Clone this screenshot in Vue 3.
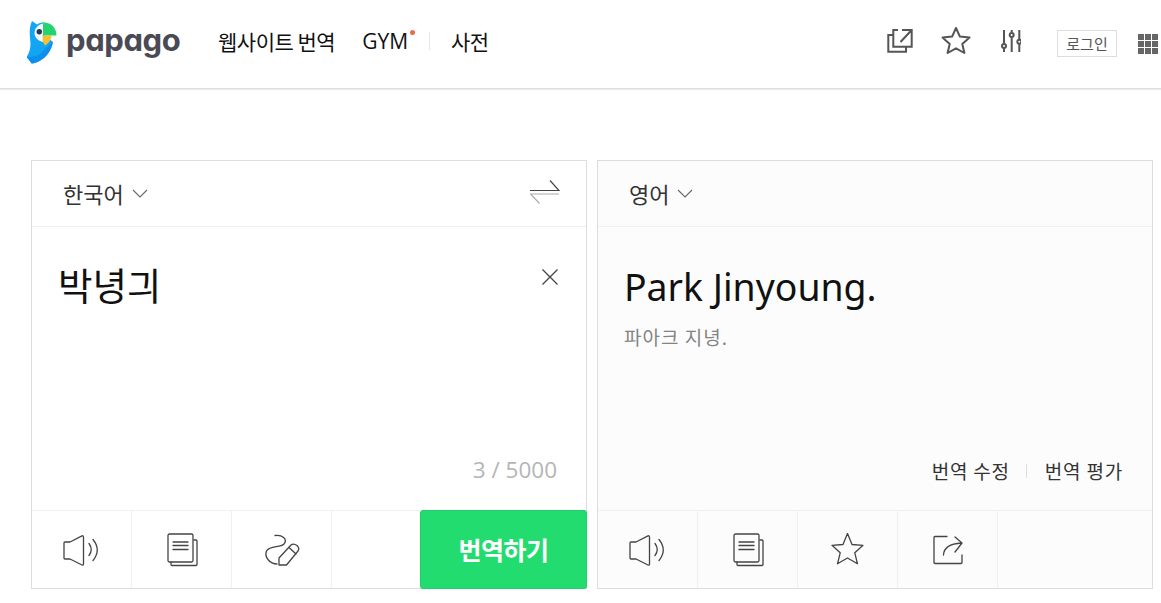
<script setup>
const leftTools = ['sound', 'copy', 'draw']
const rightTools = ['sound', 'copy', 'star', 'share']
</script>

<template>
  <div class="page">
    <header class="top">
      <div class="brand">
        <svg class="bird" width="31" height="44" viewBox="0 0 31 44">
          <path d="M6 1 L11 4.500 C13 3 15 2.500 18 2.500 L18 15 L27 22 C25 32 19 38 15 40 C12 42 8 43.500 5.700 43.500 L0.700 37 C3 33 4.500 29 4.500 24 C4.500 17 2 10 6 1 Z" fill="#12a5f4"/>
          <path d="M0.700 37 C8 37 14 36 19 29 L27 22 C25 32 19 38 15 40 C12 42 8 43.500 5.700 43.500 Z" fill="#0d8fee"/>
          <path d="M16.500 2.500 C24 1.500 30.500 7 30.500 15.500 L16.500 15.500 Z" fill="#24d46e"/>
          <path d="M17 3.500 C12 4.500 8.500 8.500 8.500 13 C8.500 17.500 12 21 17 22 Z" fill="#f2fafd"/>
          <circle cx="13.300" cy="11.700" r="2.700" fill="#27384a"/>
          <path d="M16.700 15.500 L25.500 15.500 C25.500 20 22 23.500 19 25.500 L16.700 21.500 Z" fill="#f8bf2f"/>
        </svg>
        <span class="wordmark">papago</span>
      </div>
      <nav class="menu">
        <a class="menu-item">웹사이트 번역</a>
        <a class="menu-item gym">GYM<i class="dot"></i></a>
        <span class="sep"></span>
        <a class="menu-item">사전</a>
      </nav>
      <div class="actions">
        <svg width="26" height="26" viewBox="0 0 26 26" fill="none" stroke="#555" stroke-width="2">
          <path d="M6.300 7 H1.300 V23.700 H19 V19"/>
          <path d="M11 2 H6.300 V18.700 H24.700 V11"/>
          <path d="M15 2 H24.700 V11 M24.700 2 L13.500 14"/>
        </svg>
        <svg class="head-star" width="30" height="28" viewBox="0 0 30 28" fill="none" stroke="#555" stroke-width="2" stroke-linejoin="round">
          <path d="M15 1 L18.900 9.600 L28.500 10.600 L21.300 17 L23.400 26 L15 21.300 L6.600 26 L8.700 17 L1.500 10.600 L11.100 9.600 Z"/>
        </svg>
        <svg class="sliders" width="20" height="24" viewBox="0 0 20 24" fill="none" stroke="#555" stroke-width="2">
          <path d="M3 1 V14.500 M3 19.500 V23 M10.700 1 V3.500 M10.700 8.500 V23 M18.300 1 V10 M18.300 15 V23"/>
          <circle cx="3" cy="17" r="2"/>
          <circle cx="10.700" cy="6" r="2"/>
          <circle cx="18.300" cy="12.700" r="2"/>
        </svg>
        <a class="login">로그인</a>
        <div class="apps"><i v-for="n in 9" :key="n"></i></div>
      </div>
    </header>

    <main class="panels">
      <section class="panel">
        <div class="lang-bar">
          <span class="lang">한국어</span>
          <svg class="chev" width="16" height="9" viewBox="0 0 16 9" fill="none" stroke="#666" stroke-width="1.1"><path d="M1 1 L8 8 L15 1"/></svg>
          <svg class="swap" width="30" height="26" viewBox="0 0 30 26" fill="none" stroke-width="1.2">
            <path d="M0 11.500 H29 L20 1.500" stroke="#444"/>
            <path d="M29 15 H0.500 L9.500 24.500" stroke="#aaa"/>
          </svg>
        </div>
        <div class="body">
          <div class="source">박녕긔</div>
          <svg class="clear" width="18" height="18" viewBox="0 0 18 18" fill="none" stroke="#444" stroke-width="1.3"><path d="M1.500 1.500 L16.500 16.500 M16.500 1.500 L1.500 16.500"/></svg>
          <div class="count">3 / 5000</div>
        </div>
        <div class="tools">
          <div v-for="t in leftTools" :key="t" class="tool">
            <svg width="40" height="34" viewBox="0 0 40 34" fill="none" stroke="#444" stroke-width="1.3" stroke-linejoin="round" stroke-linecap="round">
              <template v-if="t === 'sound'">
                <path d="M3 9 H8 L20 2.800 Q21.500 2.500 21.500 4 V31 Q21.500 32.500 20 32 L8 26 H3 Q2 26 2 25 V10 Q2 9 3 9 Z"/>
                <path d="M27 10.500 Q31.500 16.500 27 22.500 M31 6.500 Q39.500 17 31 27.500"/>
              </template>
              <template v-else-if="t === 'copy'">
                <path d="M32 7 H34 Q35 7 35 8 V31.500 Q35 32.500 34 32.500 H10 Q9 32.500 9 31.500 V29"/>
                <rect x="6" y="1" width="25" height="28" rx="1.500"/>
                <path d="M11 9 H26 M11 12.500 H26 M11 16.500 H26"/>
              </template>
              <template v-else>
                <path d="M13 2.500 C20 1.500 26 6 22 11 C18 15 8 12 4.500 18 C2 24 8 31 15 31"/>
                <path d="M17 32 L17 25 L29 12 Q31.500 10 35 12.500 Q38 15.500 36 18 L24.500 32 Z M27 14.500 L34 21"/>
              </template>
            </svg>
          </div>
          <button class="go">번역하기</button>
        </div>
      </section>

      <section class="panel result">
        <div class="lang-bar">
          <span class="lang">영어</span>
          <svg class="chev" width="16" height="9" viewBox="0 0 16 9" fill="none" stroke="#666" stroke-width="1.1"><path d="M1 1 L8 8 L15 1"/></svg>
        </div>
        <div class="body">
          <div class="target">Park Jinyoung.</div>
          <div class="pron">파아크 지녕.</div>
          <div class="edit">
            <span>번역 수정</span><i></i><span>번역 평가</span>
          </div>
        </div>
        <div class="tools">
          <div v-for="t in rightTools" :key="t" class="tool">
            <svg width="40" height="34" viewBox="0 0 40 34" fill="none" stroke="#444" stroke-width="1.3" stroke-linejoin="round" stroke-linecap="round">
              <template v-if="t === 'sound'">
                <path d="M3 9 H8 L20 2.800 Q21.500 2.500 21.500 4 V31 Q21.500 32.500 20 32 L8 26 H3 Q2 26 2 25 V10 Q2 9 3 9 Z"/>
                <path d="M27 10.500 Q31.500 16.500 27 22.500 M31 6.500 Q39.500 17 31 27.500"/>
              </template>
              <template v-else-if="t === 'copy'">
                <path d="M32 7 H34 Q35 7 35 8 V31.500 Q35 32.500 34 32.500 H10 Q9 32.500 9 31.500 V29"/>
                <rect x="6" y="1" width="25" height="28" rx="1.500"/>
                <path d="M11 9 H26 M11 12.500 H26 M11 16.500 H26"/>
              </template>
              <template v-else-if="t === 'star'">
                <path d="M19.500 0.500 L24 11.500 L35 12.300 L26.800 19.800 L29.500 30.800 L19.500 25 L9.500 30.800 L12.200 19.800 L4 12.300 L15 11.500 Z"/>
              </template>
              <template v-else>
                <path d="M19 3.500 H7 Q6 3.500 6 4.500 V29.500 Q6 30.500 7 30.500 H33 Q34 30.500 34 29.500 V22"/>
                <path d="M15.500 22 Q16 11 33.500 10 M27 4 L34 10 L27 19"/>
              </template>
            </svg>
          </div>
        </div>
      </section>
    </main>
  </div>
</template>

<style>
html, body { background: #fff; }
</style>

<style scoped>
.page { width: 1161px; height: 603px; overflow: hidden; font-family: "Noto Sans CJK KR", "Noto Sans", sans-serif; color: #111; }
.top { height: 88px; border-bottom: 1px solid #ddd; box-shadow: 0 1px 1px #eee; display: flex; align-items: center; }
.brand { display: flex; align-items: center; margin-left: 26px; width: 192px; margin-top: -6px; }
.bird { flex: none; margin-top: 1px; }
.wordmark { margin-left: 9px; font-family: Inter, sans-serif; font-feature-settings: "cv11"; font-weight: 700; font-size: 31px; letter-spacing: -0.4px; color: #4a4a55; line-height: 1; margin-top: -3px; }
.menu { display: flex; align-items: center; font-size: 21px; margin-top: -6px; letter-spacing: -0.5px; }
.menu-item { color: #111; white-space: nowrap; }
.gym { margin-left: 27px; position: relative; font-family: "Open Sans", sans-serif; letter-spacing: 0; }
.dot { position: absolute; right: -7px; top: 3px; width: 5px; height: 5px; border-radius: 50%; background: #ec6a50; }
.sep { width: 1px; height: 18px; background: #e5e5e5; margin: 0 21px 0 21px; }
.actions { margin-left: auto; display: flex; align-items: center; margin-top: -6px; }
.head-star { margin-left: 28px; }
.sliders { margin-left: 30px; }
.login { margin: 5px 0 0 36px; width: 60px; height: 27px; box-sizing: border-box; border: 1px solid #ddd; font-size: 15px; color: #555; display: flex; align-items: center; justify-content: center; }
.apps { margin: 5px 3px 0 21px; width: 20px; height: 20px; display: grid; grid-template-columns: repeat(3, 6px); grid-auto-rows: 6px; gap: 1px; }
.apps i { background: #666; }
.panels { display: flex; gap: 10px; margin: 71px 0 0 31px; }
.panel { width: 556px; height: 429px; box-sizing: border-box; border: 1px solid #ddd; background: #fff; display: flex; flex-direction: column; }
.result { background: #fcfcfc; }
.lang-bar { height: 66px; flex: none; box-sizing: border-box; border-bottom: 1px solid #f0f0f0; display: flex; align-items: center; padding: 0 26px 2px 31px; font-size: 22px; color: #333; }
.chev { margin-left: 8px; margin-top: 2px; }
.swap { margin-left: auto; margin-top: -2px; }
.body { flex: 1; position: relative; }
.source { position: absolute; left: 26px; top: 31px; font-size: 37.5px; line-height: 52px; color: #111; }
.clear { position: absolute; right: 27px; top: 41px; }
.count { position: absolute; right: 29px; bottom: 23px; font-size: 22.500px; line-height: 34px; color: #b5b5b5; font-family: "Open Sans", sans-serif; }
.target { padding: 34px 26px 0; font-family: "Noto Sans", sans-serif; font-size: 37.4px; line-height: 52px; color: #111; }
.pron { padding: 10px 26px 0; font-size: 19px; line-height: 28px; letter-spacing: 1px; color: #848484; }
.edit { position: absolute; right: 29px; bottom: 25px; display: flex; align-items: center; font-size: 19px; line-height: 28px; letter-spacing: 0.8px; color: #333; }
.edit i { width: 1px; height: 14px; background: #ddd; margin: 0 18px 0 16px; }
.tools { height: 78px; flex: none; box-sizing: border-box; border-top: 1px solid #f0f0f0; display: flex; position: relative; }
.tool { width: 100px; box-sizing: border-box; border-right: 1px solid #f0f0f0; display: flex; align-items: center; justify-content: center; }
.go { position: absolute; right: -1px; top: -1px; width: 167px; height: 79px; box-sizing: border-box; border: 1px solid #20cf68; border-radius: 3px; background: #23dc6f; color: #fff; font: 700 25px "Noto Sans CJK KR", sans-serif; letter-spacing: -0.5px; padding-bottom: 3px; }
</style>
